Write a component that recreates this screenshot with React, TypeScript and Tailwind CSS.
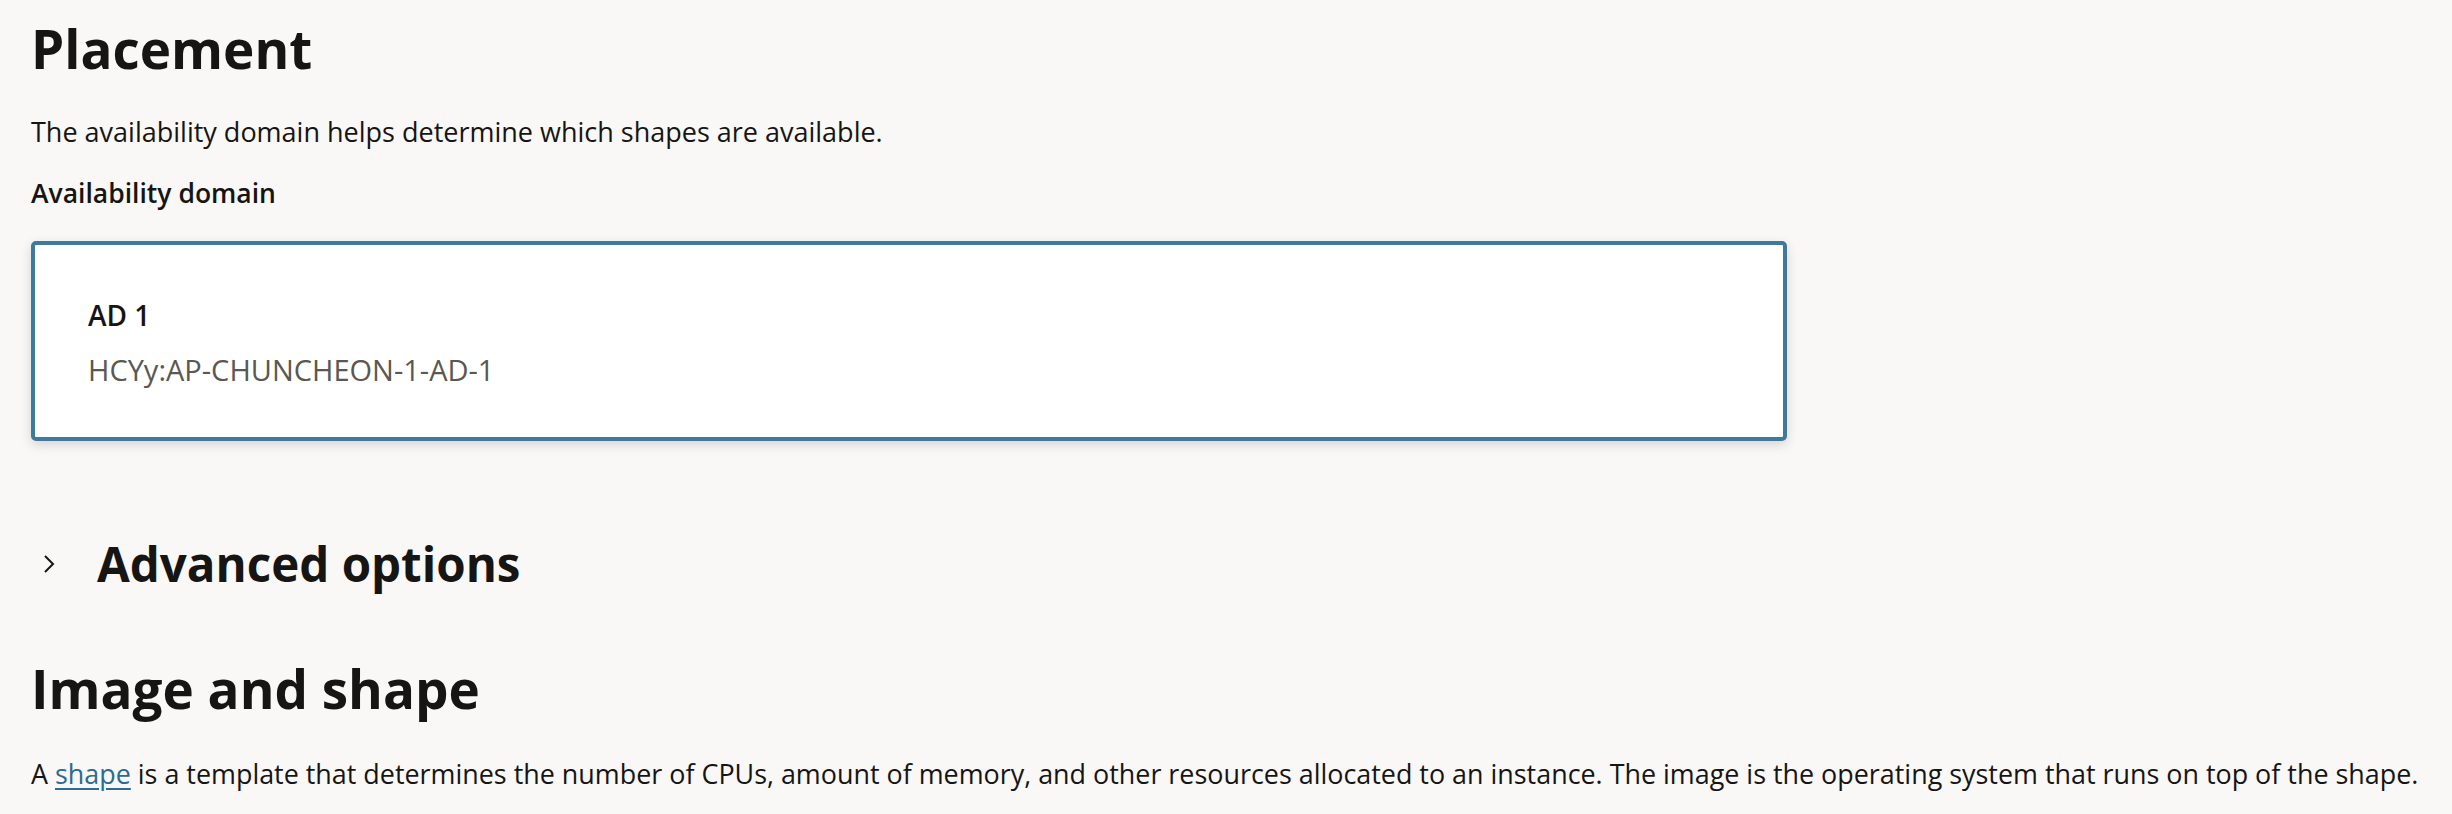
import React from "react";

function ChevronRight() {
  return (
    <svg viewBox="0 0 12 20" className="h-[20px] w-[12px]" fill="none" stroke="#161513" strokeWidth="2">
      <path d="M2 2l8 8-8 8" />
    </svg>
  );
}

export default function App() {
  return (
    <div className="min-h-[814px] w-full bg-[#f9f8f6] px-[31px] pt-[17px] text-[#161513] [font-family:'Open_Sans',sans-serif]">
      <h2 className="text-[53px] font-bold leading-[64px]">Placement</h2>
      <p className="mt-[33px] text-[27px] leading-[36px]">
        The availability domain helps determine which shapes are available.
      </p>
      <div className="mt-[25px] text-[26.5px] font-semibold leading-[36px]">Availability domain</div>

      <div className="mt-[30px] h-[200px] w-[1756px] rounded-[5px] border-[4px] border-[#3f7a9c] bg-white pl-[53px] pt-[52px] shadow-[0_4px_12px_rgba(0,0,0,0.14)]">
        <div className="text-[28px] font-semibold leading-[36px]">AD 1</div>
        <div className="mt-[19px] text-[29px] leading-[36px] text-[#5b5752]">HCYy:AP-CHUNCHEON-1-AD-1</div>
      </div>

      <button className="mt-[93px] flex items-center gap-[42px] pl-[12px]">
        <ChevronRight />
        <span className="text-[47.5px] font-bold leading-[60px]">Advanced options</span>
      </button>

      <h2 className="mt-[63px] text-[53px] font-bold leading-[64px]">Image and shape</h2>
      <p className="mt-[35px] whitespace-nowrap text-[26.9px] leading-[36px]">
        A{" "}
        <a href="#" className="text-[#2c6b93] underline underline-offset-[4px]">
          shape
        </a>{" "}
        is a template that determines the number of CPUs, amount of memory, and other resources allocated to an
        instance. The image is the operating system that runs on top of the shape.
      </p>
    </div>
  );
}
